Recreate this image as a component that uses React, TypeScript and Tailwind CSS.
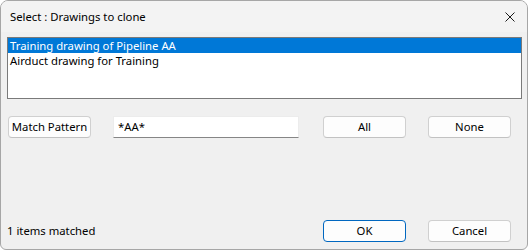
import React from 'react';

const font = { fontFamily: '"Noto Sans", "Segoe UI", sans-serif' };

const DlgButton = ({ label, primary }: { label: string; primary?: boolean }) => (
  <button
    className={
      'flex items-center justify-center h-[22px] w-[83px] shrink-0 rounded-[4px] border bg-[#fdfdfd] text-[11.3px] leading-none text-black ' +
      (primary ? 'border-[#0067c0]' : 'border-[#d0d0d0] border-b-[#c2c2c2]')
    }
  >
    {label}
  </button>
);

export default function App() {
  const items = ['Training drawing of Pipeline AA', 'Airduct drawing for Training'];

  return (
    <div className="w-[529px] h-[250px] bg-white" style={font}>
      <div className="w-[528px] h-[250px] flex flex-col border border-[#a6a6a6] rounded-t-[8px] rounded-b-[6px] bg-[#f0f0f0] overflow-hidden">
        {/* title bar */}
        <div className="h-[31px] shrink-0 flex items-center justify-between bg-[#f3f3f3] pl-[9px] pr-[10px]">
          <span className="text-[11.3px] leading-none text-black">Select : Drawings to clone</span>
          <svg width="10" height="10" viewBox="0 0 10 10" className="mr-[2px]">
            <path d="M0.5 0.5 L9.5 9.5 M9.5 0.5 L0.5 9.5" stroke="#1a1a1a" strokeWidth="1" />
          </svg>
        </div>

        <div className="flex-1 flex flex-col pt-[5px] pl-[6px] pb-[7px]">
          {/* list box */}
          <div className="w-[515px] h-[62px] border border-[#7a7a7a] bg-white">
            {items.map((t, i) => (
              <div
                key={t}
                className={
                  'h-[15px] pl-[2px] flex items-center text-[11.3px] leading-[15px] ' +
                  (i === 0 ? 'bg-[#0078d7] text-white' : 'text-black')
                }
              >
                {t}
              </div>
            ))}
          </div>

          {/* pattern row */}
          <div className="mt-[17px] flex items-center h-[22px]">
            <div className="ml-[1px] flex">
              <DlgButton label="Match Pattern" />
            </div>
            <div className="ml-[22px] w-[186px] h-[22px] bg-white border border-[#ececec] border-b-[#868686] flex items-center pl-[4px] text-[11.3px] leading-none text-black">
              *AA*
            </div>
            <div className="ml-[24px] flex">
              <DlgButton label="All" />
            </div>
            <div className="ml-[22px] flex">
              <DlgButton label="None" />
            </div>
          </div>

          {/* bottom row */}
          <div className="mt-auto flex items-center h-[22px]">
            <span className="text-[11.3px] leading-none text-black w-[316px]">1 items matched</span>
            <DlgButton label="OK" primary />
            <div className="ml-[22px] flex">
              <DlgButton label="Cancel" />
            </div>
          </div>
        </div>
      </div>
    </div>
  );
}
